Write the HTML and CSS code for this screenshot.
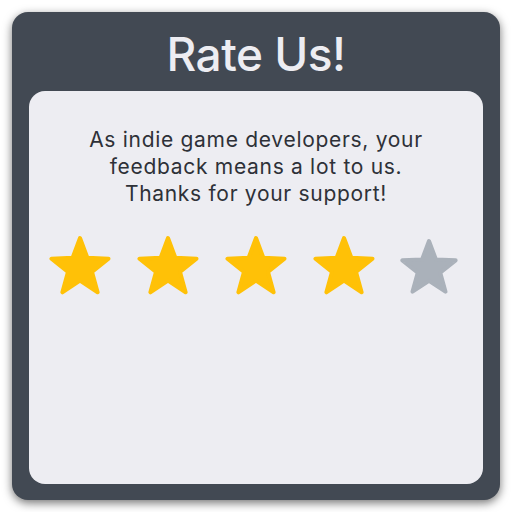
FILE: index.html
```html
<!DOCTYPE html>
<html>
<head>
<meta charset="utf-8">
<link rel="stylesheet" href="styles.css">
</head>
<body>
<div class="card">
  <h1 class="title">Rate Us!</h1>
  <div class="panel">
    <p class="message">As indie game developers, your<br>feedback means a lot to us.<br>Thanks for your support!</p>
    <div class="stars">
      <svg class="star" viewBox="0 0 64 64"><polygon class="on" points="32,5 39.41,24.81 60.53,25.73 43.98,38.89 49.63,59.27 32,47.6 14.37,59.27 20.02,38.89 3.47,25.73 24.59,24.81"/></svg>
      <svg class="star" viewBox="0 0 64 64"><polygon class="on" points="32,5 39.41,24.81 60.53,25.73 43.98,38.89 49.63,59.27 32,47.6 14.37,59.27 20.02,38.89 3.47,25.73 24.59,24.81"/></svg>
      <svg class="star" viewBox="0 0 64 64"><polygon class="on" points="32,5 39.41,24.81 60.53,25.73 43.98,38.89 49.63,59.27 32,47.6 14.37,59.27 20.02,38.89 3.47,25.73 24.59,24.81"/></svg>
      <svg class="star" viewBox="0 0 64 64"><polygon class="on" points="32,5 39.41,24.81 60.53,25.73 43.98,38.89 49.63,59.27 32,47.6 14.37,59.27 20.02,38.89 3.47,25.73 24.59,24.81"/></svg>
      <svg class="star" viewBox="0 0 64 64"><polygon class="off" points="29,8 35.94,26.45 55.63,27.35 40.22,39.65 45.46,58.65 29,47.8 12.54,58.65 17.78,39.65 2.37,27.35 22.06,26.45"/></svg>
    </div>
  </div>
</div>
</body>
</html>
```

FILE: styles.css
```css
html, body {
  margin: 0;
  padding: 0;
  background: #ffffff;
}

body {
  width: 512px;
  height: 512px;
  padding: 12px;
  box-sizing: border-box;
  font-family: Inter, "Noto Sans", sans-serif;
}

.card {
  width: 488px;
  height: 488px;
  box-sizing: border-box;
  background: #424953;
  border-radius: 16px;
  box-shadow: 0 3px 10px rgba(0, 0, 0, 0.55);
  padding: 0 17px 16px;
  display: flex;
  flex-direction: column;
}

.title {
  margin: 19px 0 14px;
  font-size: 46px;
  line-height: 46px;
  font-weight: 500;
  color: #ededf2;
  text-align: center;
  letter-spacing: -0.5px;
}

.panel {
  flex: 1;
  background: #ededf2;
  border-radius: 16px;
  padding-top: 35px;
  display: flex;
  flex-direction: column;
  align-items: center;
}

.message {
  margin: 0;
  font-size: 21px;
  line-height: 27px;
  color: #2e3138;
  text-align: center;
  letter-spacing: 0.7px;
}

.stars {
  margin-top: 26px;
  display: flex;
  gap: 24px;
}

.star {
  width: 64px;
  height: 64px;
  display: block;
}

.on {
  fill: #ffc107;
  stroke: #ffc107;
  stroke-width: 4;
  stroke-linejoin: round;
}

.off {
  fill: #aab1ba;
  stroke: #aab1ba;
  stroke-width: 4;
  stroke-linejoin: round;
}
```
